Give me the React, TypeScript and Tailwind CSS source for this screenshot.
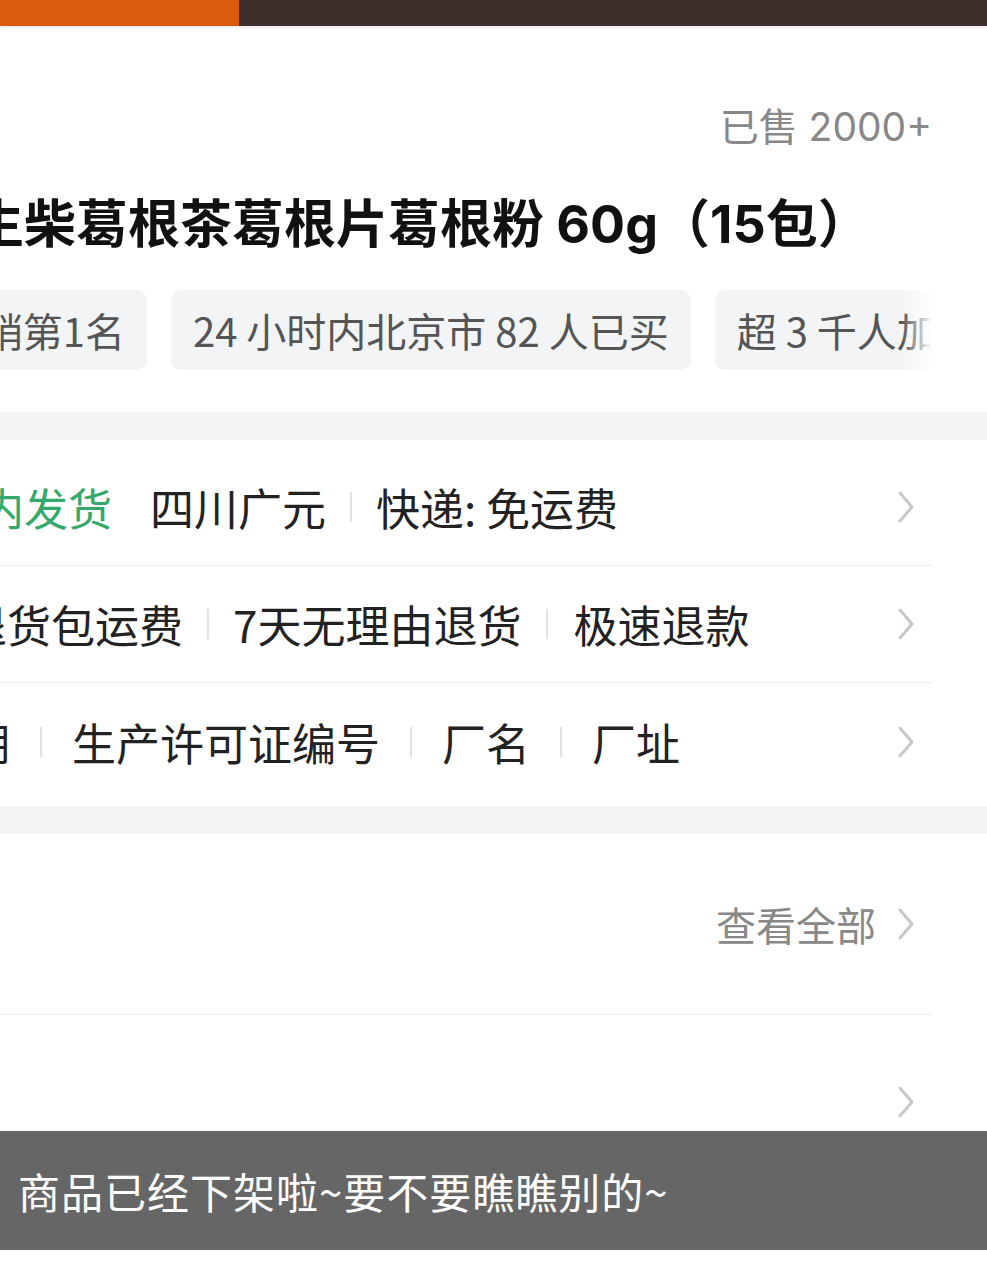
import type { ReactNode } from 'react';

function Chevron({ className = '' }: { className?: string }) {
  return (
    <svg width="20" height="34" viewBox="0 0 20 34" className={className}>
      <polyline points="4,3 16,17 4,31" fill="none" stroke="#c8c8c8" strokeWidth="3" strokeLinecap="round" strokeLinejoin="round" />
    </svg>
  );
}

function Sep({ gap }: { gap: string }) {
  return <span className={`w-[2px] h-[30px] bg-[#e2e2e2] shrink-0 ${gap}`}></span>;
}

function Row({ children, last = false }: { children: ReactNode; last?: boolean }) {
  return (
    <div className={`h-[117px] mr-[55px] flex items-center ${last ? '' : 'border-b border-[#ececec]'}`}>
      <div className="flex items-center whitespace-nowrap text-[44px] text-[#222]">{children}</div>
      <Chevron className="ml-auto mr-[16px]" />
    </div>
  );
}

export default function App() {
  return (
    <div className="relative w-[987px] h-[1261px] overflow-hidden bg-white font-['Noto_Sans_CJK_SC','Noto_Sans',sans-serif]">
      {/* top strip */}
      <div className="flex h-[26px] shadow-[0_2px_3px_rgba(0,0,0,0.08)]">
        <div className="w-[239px] bg-[#dc5a0b]"></div>
        <div className="flex-1 bg-[#3b2e2b]"></div>
      </div>

      {/* product info */}
      <div className="h-[386px] flex flex-col">
        <div className="mt-[77px] h-[48px] pr-[55px] flex items-center justify-end text-[39px] text-[#888] font-['Inter','Noto_Sans_CJK_SC',sans-serif]">
          已售 2000+
        </div>
        <div className="mt-[44px] h-[60px] flex items-center whitespace-nowrap">
          <span className="ml-[-28px] text-[52px] font-bold text-[#111] leading-none font-['Inter','Noto_Sans_CJK_SC',sans-serif]">
            生柴葛根茶葛根片葛根粉 60g（15包）
          </span>
        </div>
        <div className="relative mt-[35px] h-[80px] mr-[55px] flex gap-[24px] overflow-hidden text-[40px] text-[#555] whitespace-nowrap">
          <div className="w-[260px] ml-[-113px] shrink-0 rounded-[10px] bg-[#f2f4f6] px-[22px] flex items-center justify-end">
            热销第1名
          </div>
          <div className="shrink-0 rounded-[10px] bg-[#f2f4f6] px-[22px] flex items-center">
            24 小时内北京市 82 人已买
          </div>
          <div className="shrink-0 rounded-[10px] bg-[#f2f4f6] px-[22px] flex items-center">
            超 3 千人加购
          </div>
          <div className="absolute right-0 top-0 h-full w-[30px] bg-gradient-to-r from-white/0 to-white"></div>
        </div>
      </div>

      <div className="h-[28px] bg-[#f4f5f7]"></div>

      {/* service rows */}
      <div className="pt-[9px] pb-[6px]">
        <Row>
          <span className="w-[300px] ml-[-188px] text-right text-[#35a86c]">48小时内发货</span>
          <span className="ml-[38px]">四川广元</span>
          <Sep gap="mx-[24px]" />
          <span>快递: 免运费</span>
        </Row>
        <Row>
          <span className="w-[300px] ml-[-117px] text-right">退货包运费</span>
          <Sep gap="mx-[24px]" />
          <span>7天无理由退货</span>
          <Sep gap="mx-[25px]" />
          <span>极速退款</span>
        </Row>
        <Row last>
          <span className="w-[300px] ml-[-290px] text-right">生产日期</span>
          <Sep gap="mx-[30px]" />
          <span>生产许可证编号</span>
          <Sep gap="mx-[30px]" />
          <span>厂名</span>
          <Sep gap="mx-[30px]" />
          <span>厂址</span>
        </Row>
      </div>

      <div className="h-[28px] bg-[#f4f5f7]"></div>

      {/* reviews */}
      <div className="mr-[55px]">
        <div className="h-[181px] flex items-center justify-end border-b border-[#ececec]">
          <span className="text-[40px] text-[#888]">查看全部</span>
          <Chevron className="ml-[20px] mr-[16px]" />
        </div>
        <div className="h-[174px] flex items-center justify-end">
          <Chevron className="mr-[16px]" />
        </div>
      </div>

      {/* toast */}
      <div className="absolute left-0 right-0 top-[1131px] h-[119px] bg-[#666666] flex items-center pl-[18px]">
        <span className="text-[42px] text-white whitespace-nowrap tracking-[1px]">商品已经下架啦~要不要瞧瞧别的~</span>
      </div>
    </div>
  );
}
